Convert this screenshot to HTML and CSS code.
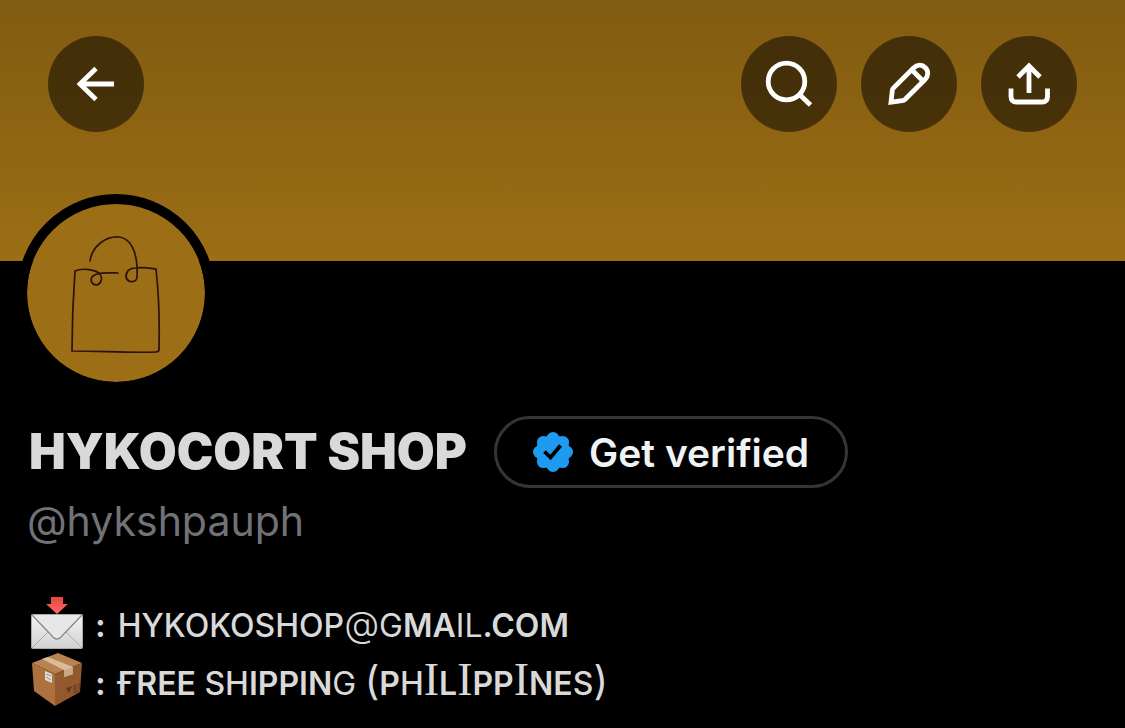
FILE: index.html
```html
<!DOCTYPE html>
<html lang="en">
<head>
    <meta charset="UTF-8">
    <meta name="viewport" content="width=device-width, initial-scale=1.0">
    <title>HYKOCORT SHOP</title>
    <link rel="stylesheet" href="styles.css">
</head>
<body>
    <header class="banner">
        <button class="round-btn" type="button" aria-label="Back">
            <svg viewBox="0 0 96 96" fill="none" stroke="#fff" stroke-width="4.800">
                <path d="M66 48H32M48 32.500L32 48L48 63.500"/>
            </svg>
        </button>
        <div class="banner-actions">
            <button class="round-btn" type="button" aria-label="Search">
                <svg viewBox="0 0 96 96" fill="none" stroke="#fff" stroke-width="4.800">
                    <circle cx="45.500" cy="45.500" r="18.300"/>
                    <path d="M58.500 58.500L69.500 69"/>
                </svg>
            </button>
            <button class="round-btn" type="button" aria-label="Edit profile">
                <svg viewBox="0 0 96 96" fill="none" stroke="#fff" stroke-width="4.800">
                    <path d="M30 66.200L31.300 54.500Q31.500 53 32.600 51.900L52.500 32C56 28.500 61 28.300 64.400 31.700C67.700 35 67.400 40 64 43.500L44 63.400Q42.800 64.500 41.300 64.700Z"/>
                    <path d="M50.500 33.500L62 45"/>
                </svg>
            </button>
            <button class="round-btn" type="button" aria-label="Share">
                <svg viewBox="0 0 96 96" fill="none" stroke="#fff" stroke-width="4.800">
                    <path d="M48 57V30M37 41L48 30L59 41M30 52.500V60.500Q30 66 35.500 66H61Q66.500 66 66.500 60.500V52.500"/>
                </svg>
            </button>
        </div>
    </header>

    <main class="profile">
        <div class="avatar">
            <svg viewBox="0 0 178 178" fill="none" stroke="#2b120d" stroke-width="1.700" stroke-linecap="round" stroke-linejoin="round">
                <path d="M63 57C65 42 79 32 92 33C104 34 109 48 110 62C110 68 111 74 109 76C106 79 100 78 99 73C99 68 102 64 109 64C116 63 122 64 129 65C131 83 133 105 132 145Q132 148 129 148C102 149 74 147 45 147C45 120 46 94 48 67C54 64 66 65 72 69C76 73 75 79 70 81C65 81 63 77 65 73C69 68 79 69 91 69"/>
            </svg>
        </div>

        <div class="name-row">
            <h1>HYKOCORT SHOP</h1>
            <button class="verify-btn" type="button">
                <svg viewBox="0 0 40 40" aria-hidden="true">
                    <g fill="#1d9bf0">
                        <circle cx="20" cy="20" r="17"/>
                        <circle cx="20" cy="6.500" r="6.500"/>
                        <circle cx="29.600" cy="10.400" r="6.500"/>
                        <circle cx="33.500" cy="20" r="6.500"/>
                        <circle cx="29.600" cy="29.600" r="6.500"/>
                        <circle cx="20" cy="33.500" r="6.500"/>
                        <circle cx="10.400" cy="29.600" r="6.500"/>
                        <circle cx="6.500" cy="20" r="6.500"/>
                        <circle cx="10.400" cy="10.400" r="6.500"/>
                    </g>
                    <path d="M11.500 19.500L17.500 25.500L27.500 13.500" fill="none" stroke="#000" stroke-width="3.800"/>
                </svg>
                Get verified
            </button>
        </div>
        <p class="handle">@hykshpauph</p>

        <div class="bio">
            <p>
                <svg class="emoji" viewBox="0 1 52 54" role="img" aria-label="Email">
                    <defs>
                        <linearGradient id="paper" x1="0" y1="0" x2="0" y2="1">
                            <stop offset="0" stop-color="#f3f3f3"/>
                            <stop offset="1" stop-color="#d2d2d4"/>
                        </linearGradient>
                        <linearGradient id="arrow" x1="0" y1="0" x2="0" y2="1">
                            <stop offset="0" stop-color="#e9443f"/>
                            <stop offset="1" stop-color="#ff6a63"/>
                        </linearGradient>
                    </defs>
                    <rect x="0.500" y="18.500" width="51" height="34" rx="1" fill="url(#paper)" stroke="#aaa"/>
                    <path d="M1 52L18 35M51 52L34 35" stroke="#aaa" fill="none"/>
                    <path d="M1 19L22 41Q26 45 30 41L51 19Z" fill="#e7e7e8"/>
                    <path d="M1 19L22 41Q26 45 30 41L51 19" fill="none" stroke="#85878b" stroke-width="1.200"/>
                    <path d="M20 1H32V8H37L26 18L15 8H20Z" fill="url(#arrow)"/>
                </svg>
                <span class="colon">:</span>
                <span>HYKOKOSHOP<span class="thin at">@</span><span class="thin">G</span><span class="heavy">MA</span><span class="thin">IL</span><span class="heavy">.COM</span></span>
            </p>
            <p>
                <svg class="emoji" viewBox="0 4 52 54" role="img" aria-label="Package">
                    <path d="M1 12L27 2L51 12L24 23Z" fill="#b9824f"/>
                    <path d="M1 12L24 23V55L3 40Z" fill="#ad713d"/>
                    <path d="M24 23L51 12L49 41L24 55Z" fill="#93592e"/>
                    <path d="M11 8L17 6L42 16V23L33 26V19Z" fill="#d9bc98"/>
                    <path d="M33 19L42 16V23L33 26Z" fill="#c9a982"/>
                    <path d="M14 20L21 23V32L14 29Z" fill="#dedbd5"/>
                    <path d="M15 23L20 25M15 26L20 29" stroke="#929292"/>
                    <path d="M35 37L41 35L38 42Z" fill="#60391f"/>
                    <path d="M43 34V42M48 32V40M43 42L48 40M45 33V40" stroke="#60391f" fill="none"/>
                </svg>
                <span class="colon">:</span>
                <span><span class="heavy">ҒREE</span> SH<span class="heavy">IPPIN</span><span class="thin">G</span> <span class="paren">(</span><span class="heavy">P</span>H<span class="serif">I</span><span class="heavy">L</span><span class="serif">I</span><span class="heavy">PP</span><span class="serif">I</span><span class="heavy">NE</span>S<span class="paren">)</span></span>
            </p>
        </div>
    </main>
</body>
</html>
```
FILE: styles.css
```css
:root {
    --text-color: #d9d9d9;
    --muted-color: #717277;
    --border-color: #333639;
    --brand-color: #9c6e15;
}

* {
    box-sizing: border-box;
}

body {
    margin: 0;
    background: #000;
    color: var(--text-color);
    font-family: Inter, "Liberation Sans", sans-serif;
}

h1, p {
    margin: 0;
}

button {
    font-family: inherit;
    cursor: pointer;
}

.banner {
    display: flex;
    justify-content: space-between;
    padding: 36px 48px 129px;
    background: linear-gradient(#815b11, var(--brand-color));
}

.banner-actions {
    display: flex;
    gap: 24px;
}

.round-btn {
    width: 96px;
    height: 96px;
    padding: 0;
    border: none;
    border-radius: 50%;
    background: rgba(0, 0, 0, 0.5);
}

.round-btn svg {
    display: block;
    width: 100%;
}

.profile {
    padding: 0 17px;
}

/* overlaps the lower edge of the banner */
.avatar {
    width: 198px;
    height: 198px;
    margin-top: -67px;
    border: 10px solid #000;
    border-radius: 50%;
    background: var(--brand-color);
    background-clip: padding-box;
}

.avatar svg {
    display: block;
    width: 100%;
}

.name-row {
    display: flex;
    align-items: center;
    gap: 27px;
    margin-top: 24px;
    padding-left: 12px;
}

h1 {
    font-size: 49px;
    font-weight: 900;
    line-height: 56px;
    white-space: nowrap;
}

.verify-btn {
    display: flex;
    align-items: center;
    gap: 16px;
    height: 72px;
    padding: 0 36px;
    border: 3px solid var(--border-color);
    border-radius: 36px;
    background: transparent;
    color: #eff3f4;
    font-size: 39px;
    font-weight: 600;
    white-space: nowrap;
}

.verify-btn svg {
    width: 40px;
    height: 40px;
}

.handle {
    padding-left: 10px;
    margin-top: 4px;
    color: var(--muted-color);
    font-size: 41px;
    line-height: 58px;
}

.bio {
    margin-top: 47px;
    padding-left: 14px;
    font-size: 32px;
    font-weight: 500;
    line-height: 58px;
}

.bio p {
    display: flex;
    align-items: center;
    gap: 12px;
    height: 58px;
}

.emoji {
    align-self: flex-start;
    width: 52px;
    height: 54px;
    overflow: visible;
}

.colon {
    font-weight: 700;
}

.thin {
    font-weight: 400;
}

.heavy {
    font-weight: 600;
}

.at {
    font-size: 36px;
    font-weight: 300;
    line-height: 1;
}

.paren {
    font-size: 40px;
    font-weight: 400;
    line-height: 1;
}

.serif {
    font-family: "Liberation Serif", serif;
    font-size: 46px;
    line-height: 1;
}
```
